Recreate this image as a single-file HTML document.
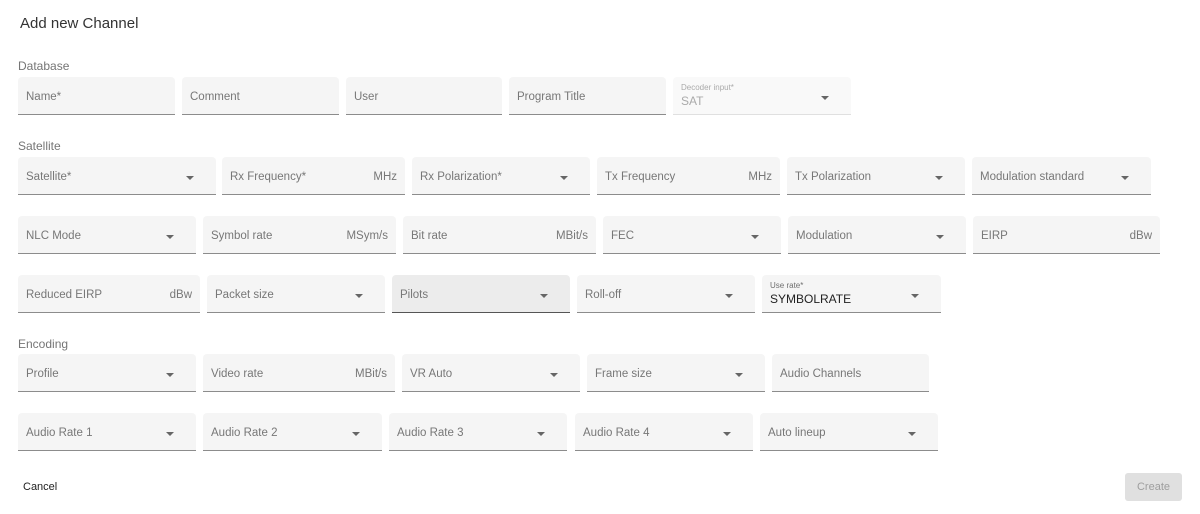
<!DOCTYPE html>
<html><head><style>
body{margin:0;width:1200px;height:514px;background:#fff;font-family:"Liberation Sans",Arial,sans-serif;position:relative;overflow:hidden}
.h{position:absolute;color:#757575;font-size:12px}
.t{position:absolute;left:20px;top:15px;font-size:15px;color:#333}
.f{position:absolute;height:37px;background:#f5f5f5;border-bottom:1px solid #8c8c8c;border-radius:4px 4px 0 0;box-sizing:content-box}
.f .l{position:absolute;left:8px;top:14px;font-size:11.5px;color:#777}
.f .s{position:absolute;right:8px;top:14px;font-size:11.5px;color:#777}
.f .a{position:absolute;right:22px;top:19px;width:0;height:0;border-left:4px solid transparent;border-right:4px solid transparent;border-top:4px solid #666}
.f .sm{position:absolute;left:8px;top:6px;font-size:8px;color:#6f6f6f}
.f .v{position:absolute;left:8px;top:17px;font-size:12px;color:#222}
</style></head><body>
<div class="t">Add new Channel</div>
<div class="h" style="left:18px;top:59px">Database</div>
<div class="h" style="left:18px;top:139px">Satellite</div>
<div class="h" style="left:18px;top:337px">Encoding</div>

<div class="f" style="left:18px;top:77px;width:157px"><span class="l">Name*</span></div>
<div class="f" style="left:182px;top:77px;width:157px"><span class="l">Comment</span></div>
<div class="f" style="left:346px;top:77px;width:156px"><span class="l">User</span></div>
<div class="f" style="left:509px;top:77px;width:157px"><span class="l">Program Title</span></div>
<div class="f" style="left:673px;top:77px;width:178px;background:#f9f9f9;border-bottom:1px solid #e0e0e0"><span class="sm" style="color:#aaa">Decoder input*</span><span class="v" style="color:#aaa">SAT</span><span class="a"></span></div>

<div class="f" style="left:18px;top:157px;width:198px"><span class="l">Satellite*</span><span class="a"></span></div>
<div class="f" style="left:222px;top:157px;width:183px"><span class="l">Rx Frequency*</span><span class="s">MHz</span></div>
<div class="f" style="left:412px;top:157px;width:178px"><span class="l">Rx Polarization*</span><span class="a"></span></div>
<div class="f" style="left:597px;top:157px;width:183px"><span class="l">Tx Frequency</span><span class="s">MHz</span></div>
<div class="f" style="left:787px;top:157px;width:178px"><span class="l">Tx Polarization</span><span class="a"></span></div>
<div class="f" style="left:972px;top:157px;width:179px"><span class="l">Modulation standard</span><span class="a"></span></div>

<div class="f" style="left:18px;top:216px;width:178px"><span class="l">NLC Mode</span><span class="a"></span></div>
<div class="f" style="left:203px;top:216px;width:193px"><span class="l">Symbol rate</span><span class="s">MSym/s</span></div>
<div class="f" style="left:403px;top:216px;width:193px"><span class="l">Bit rate</span><span class="s">MBit/s</span></div>
<div class="f" style="left:603px;top:216px;width:178px"><span class="l">FEC</span><span class="a"></span></div>
<div class="f" style="left:788px;top:216px;width:178px"><span class="l">Modulation</span><span class="a"></span></div>
<div class="f" style="left:973px;top:216px;width:187px"><span class="l">EIRP</span><span class="s">dBw</span></div>

<div class="f" style="left:18px;top:275px;width:182px"><span class="l">Reduced EIRP</span><span class="s">dBw</span></div>
<div class="f" style="left:207px;top:275px;width:178px"><span class="l">Packet size</span><span class="a"></span></div>
<div class="f" style="left:392px;top:275px;width:178px;background:#ececec;border-bottom-color:#555"><span class="l">Pilots</span><span class="a"></span></div>
<div class="f" style="left:577px;top:275px;width:178px"><span class="l">Roll-off</span><span class="a"></span></div>
<div class="f" style="left:762px;top:275px;width:179px"><span class="sm">Use rate*</span><span class="v">SYMBOLRATE</span><span class="a"></span></div>

<div class="f" style="left:18px;top:354px;width:178px"><span class="l">Profile</span><span class="a"></span></div>
<div class="f" style="left:203px;top:354px;width:192px"><span class="l">Video rate</span><span class="s">MBit/s</span></div>
<div class="f" style="left:402px;top:354px;width:178px"><span class="l">VR Auto</span><span class="a"></span></div>
<div class="f" style="left:587px;top:354px;width:178px"><span class="l">Frame size</span><span class="a"></span></div>
<div class="f" style="left:772px;top:354px;width:157px"><span class="l">Audio Channels</span></div>

<div class="f" style="left:18px;top:413px;width:178px"><span class="l">Audio Rate 1</span><span class="a"></span></div>
<div class="f" style="left:203px;top:413px;width:179px"><span class="l">Audio Rate 2</span><span class="a"></span></div>
<div class="f" style="left:389px;top:413px;width:178px"><span class="l">Audio Rate 3</span><span class="a"></span></div>
<div class="f" style="left:575px;top:413px;width:178px"><span class="l">Audio Rate 4</span><span class="a"></span></div>
<div class="f" style="left:760px;top:413px;width:178px"><span class="l">Auto lineup</span><span class="a"></span></div>

<div style="position:absolute;left:23px;top:481px;font-size:11px;color:#222">Cancel</div>
<div style="position:absolute;left:1125px;top:473px;width:57px;height:28px;background:#e0e0e0;border-radius:3px;color:#9e9e9e;font-size:11px;text-align:center;line-height:28px">Create</div>
</body></html>
